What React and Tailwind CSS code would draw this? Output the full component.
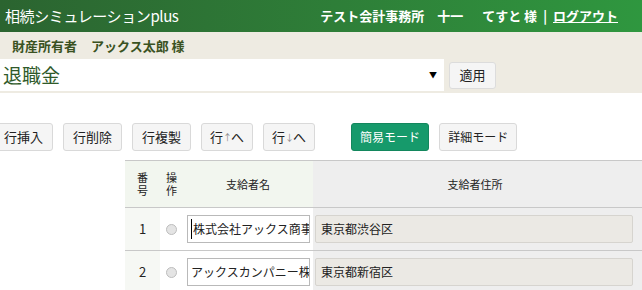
import React from 'react'

const rows = [
  { no: 1, name: '株式会社アックス商事', addr: '東京都渋谷区', focused: true },
  { no: 2, name: 'アックスカンパニー株式会社', addr: '東京都新宿区', focused: false },
]

const ToolButton = ({ children, green, mode, tight }) => {
  const base = 'h-[28px] rounded-[3px] border flex items-center'
  const size = mode ? 'px-[8px] text-[12px]' : tight ? 'px-[8px] text-[13px]' : 'px-[9px] text-[13px]'
  const color = green
    ? 'border-[#13875d] bg-[#169a6b] text-white'
    : 'border-[#d9d9d9] bg-[#f5f5f5] text-[#222]'
  return <button className={`${base} ${size} ${color}`}>{children}</button>
}

const Arrow = ({ children }) => (
  <span className="inline-block w-[8px] text-center text-[9px] leading-[9px] text-[#888]">{children}</span>
)

const App = () => {
  return (
    <div className="w-[642px] h-[290px] overflow-hidden bg-white font-['Noto_Sans_CJK_JP',sans-serif] text-[#222]">
      <header className="h-[32px] flex items-center justify-between bg-linear-to-r from-[#2b6430] to-[#2f973f] text-white">
        <div className="pl-[5px] text-[15px] tracking-[-0.4px]">相続シミュレーションplus</div>
        <div className="pr-[24px] text-[13px] font-bold flex items-center">
          <span>テスト会計事務所</span>
          <span className="ml-[13px]">十一</span>
          <span className="ml-[19px]">てすと 様</span>
          <span className="mx-[6px]">|</span>
          <a className="underline">ログアウト</a>
        </div>
      </header>

      <div className="bg-[#eeebe2]">
        <div className="h-[27px] flex items-center pl-[12px] text-[13px] font-bold text-[#3a5222]">
          <span>財産所有者</span>
          <span className="ml-[14px]">アックス太郎 様</span>
        </div>
        <div className="flex items-center pb-[2px]">
          <div className="w-[444px] h-[32px] bg-white flex items-center justify-between pl-[3px] pr-[7px]">
            <span className="text-[19px] text-[#2f5a2a]">退職金</span>
            <span className="text-[8px] text-black">▼</span>
          </div>
          <button className="ml-[5px] h-[27px] w-[47px] rounded-[3px] border border-[#dcdcdc] bg-[#f5f5f5] text-[13px]">
            適用
          </button>
        </div>
      </div>

      <div className="mt-[30px] ml-[-6px] flex items-center gap-[10px]">
        <ToolButton>行挿入</ToolButton>
        <ToolButton>行削除</ToolButton>
        <ToolButton>行複製</ToolButton>
        <ToolButton tight>行<Arrow>↑</Arrow>へ</ToolButton>
        <ToolButton tight>行<Arrow>↓</Arrow>へ</ToolButton>
        <div className="ml-[26px] flex gap-[10px]">
          <ToolButton green mode>簡易モード</ToolButton>
          <ToolButton mode>詳細モード</ToolButton>
        </div>
      </div>

      <table className="mt-[9px] ml-[125px] border-collapse table-fixed w-[620px] text-[12px]">
        <colgroup>
          <col className="w-[35px]" />
          <col className="w-[23px]" />
          <col className="w-[130px]" />
          <col className="w-[324px]" />
          <col className="w-[108px]" />
        </colgroup>
        <thead>
          <tr className="h-[47px] border-t border-b border-[#c8c8c8] text-[11px]">
            <th className="bg-[#f2f6ef] font-normal leading-[13px]">番<br />号</th>
            <th className="bg-[#f2f6ef] font-normal leading-[13px]">操<br />作</th>
            <th className="bg-[#f2f6ef] font-normal">支給者名</th>
            <th className="bg-[#eeeeee] font-normal">支給者住所</th>
            <th className="bg-[#eeeeee]"></th>
          </tr>
        </thead>
        <tbody>
          {rows.map((r) => (
            <tr key={r.no} className="h-[43px] border-b border-[#c8c8c8]">
              <td className="bg-[#f6f8f4] text-center text-[13px]">{r.no}</td>
              <td className="bg-white">
                <div className="mx-auto w-[11px] h-[11px] rounded-full border border-[#bdbdbd] bg-[#e4e4e4]"></div>
              </td>
              <td className="bg-white pl-[4px]">
                <div className="w-[123px] h-[28px] border border-[#b9b9b9] bg-white flex items-center pl-[3px] overflow-hidden whitespace-nowrap">
                  {r.focused && <span className="w-px h-[20px] bg-black mr-px shrink-0"></span>}
                  <span className="block min-w-0 overflow-hidden">{r.name}</span>
                </div>
              </td>
              <td className="bg-[#eeeeee] pl-[2px]">
                <div className="w-[318px] h-[28px] border border-[#d6d4cf] rounded-[2px] bg-[#ebe9e4] flex items-center pl-[5px]">
                  {r.addr}
                </div>
              </td>
              <td className="bg-[#eeeeee]"></td>
            </tr>
          ))}
        </tbody>
      </table>
    </div>
  )
}

export default App
